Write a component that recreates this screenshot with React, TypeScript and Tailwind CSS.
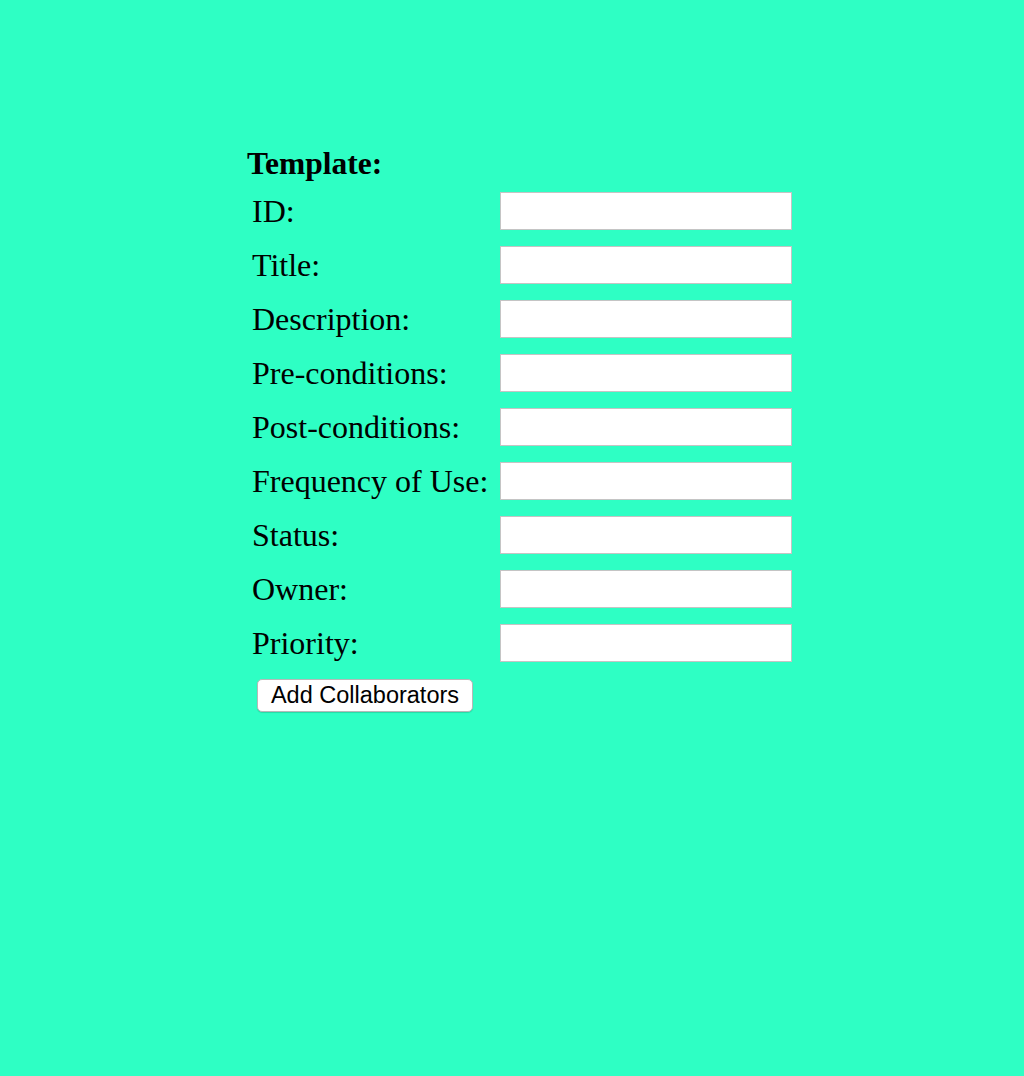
import React from 'react';

const fields = [
  'ID:',
  'Title:',
  'Description:',
  'Pre-conditions:',
  'Post-conditions:',
  'Frequency of Use:',
  'Status:',
  'Owner:',
  'Priority:',
];

export default function App() {
  return (
    <div className="min-h-[1076px] w-full bg-[#2effc4] pl-[247px] pt-[147px] text-black">
      <h2 className="text-[31.5px] font-bold leading-[34px] font-['Liberation_Serif','Times_New_Roman',serif]">
        Template:
      </h2>

      {/* form rows */}
      <div className="mt-[11px] flex flex-col gap-4 pl-[5px]">
        {fields.map((label) => (
          <div key={label} className="flex items-center h-[38px]">
            <label className="w-[248px] text-[32px] leading-[38px] font-['Liberation_Serif','Times_New_Roman',serif] whitespace-nowrap">
              {label}
            </label>
            <input
              type="text"
              className="w-[292px] h-[38px] bg-white border border-[#c4c4c4] outline-none px-1"
            />
          </div>
        ))}
      </div>

      <button className="mt-[17px] ml-[10px] h-[33px] w-[216px] rounded-[5px] border border-[#b8b8b8] bg-white text-[23.5px] leading-none font-['Liberation_Sans',Arial,sans-serif] shadow-[0_1px_1px_rgba(0,0,0,0.15)]">
        Add Collaborators
      </button>
    </div>
  );
}
